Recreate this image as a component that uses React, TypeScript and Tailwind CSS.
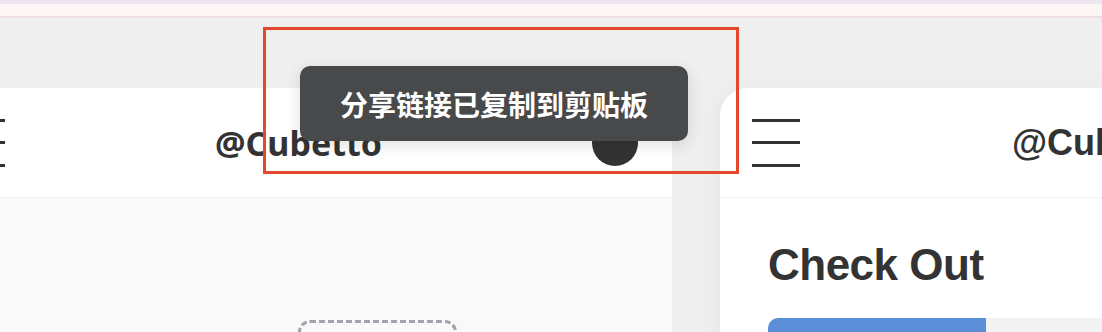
import React from 'react';

function Hamburger() {
  return (
    <div className="flex w-[48px] shrink-0 flex-col gap-[19.5px]">
      <span className="block h-[3px] w-full bg-[#333333]" />
      <span className="block h-[3px] w-full bg-[#333333]" />
      <span className="block h-[3px] w-full bg-[#333333]" />
    </div>
  );
}

export default function App() {
  return (
    <div className="relative h-[332px] w-[1102px] overflow-hidden bg-[#efefef]">
      {/* browser strip */}
      <div className="h-[4px] bg-[#ede6ee]" />
      <div className="h-[12px] bg-[#fef6f6]" />
      <div className="h-[2px] bg-[#eedfe5]" />

      {/* phone frames */}
      <div className="ml-[-75px] mt-[70px] flex gap-[48px]">
        {/* left frame */}
        <div className="w-[747px] shrink-0 overflow-hidden rounded-tr-[28px] bg-[#f9f9f9]">
          <div className="flex h-[110px] items-center justify-between border-b border-[#f0f0f0] bg-white pl-[32px] pr-[34px]">
            <Hamburger />
            <span className="font-['Noto_Sans',sans-serif] text-[34px] font-bold leading-none text-[#333333]">
              @Cubetto
            </span>
            <span className="block h-[46px] w-[46px] rounded-full bg-[#333333]" />
          </div>
          <div className="pl-[373px] pt-[122px]">
            <div className="h-[80px] w-[159px] rounded-[12px] border-[3px] border-dashed border-[#a0a4ac]" />
          </div>
        </div>

        {/* right frame */}
        <div className="w-[747px] shrink-0 overflow-hidden rounded-tl-[28px] bg-white shadow-[-6px_0_18px_rgba(0,0,0,0.03)]">
          <div className="flex h-[110px] items-center justify-between border-b border-[#f2f2f2] pl-[32px] pr-[34px]">
            <Hamburger />
            <span className="ml-[8px] font-['Liberation_Sans',Arial,sans-serif] text-[36px] font-bold leading-none text-[#333333]">
              @Cubetto
            </span>
            <span className="block h-[46px] w-[46px] rounded-full bg-[#333333]" />
          </div>
          <div className="px-[48px] pt-[45px]">
            <h1 className="font-['Liberation_Sans',Arial,sans-serif] text-[44px] font-bold leading-none tracking-[-0.5px] text-[#333333]">
              Check Out
            </h1>
            <div className="mt-[31px] flex h-[20px] overflow-hidden rounded-t-[10px] bg-[#f3f3f3]">
              <div className="w-[218px] bg-[#5a8fd8]" />
            </div>
          </div>
        </div>
      </div>

      {/* toast */}
      <div className="absolute left-[300px] top-[66px] flex h-[75px] w-[388px] items-center justify-center rounded-[10px] bg-[#48494b] shadow-[0_4px_16px_rgba(0,0,0,0.12)]">
        <span className="font-['Noto_Sans_CJK_SC','Noto_Sans',sans-serif] text-[28px] font-bold leading-none text-white">
          分享链接已复制到剪贴板
        </span>
      </div>

      {/* annotation box */}
      <div className="pointer-events-none absolute left-[263px] top-[27px] h-[147px] w-[476px] border-[3px] border-[#e5462c]" />
    </div>
  );
}
